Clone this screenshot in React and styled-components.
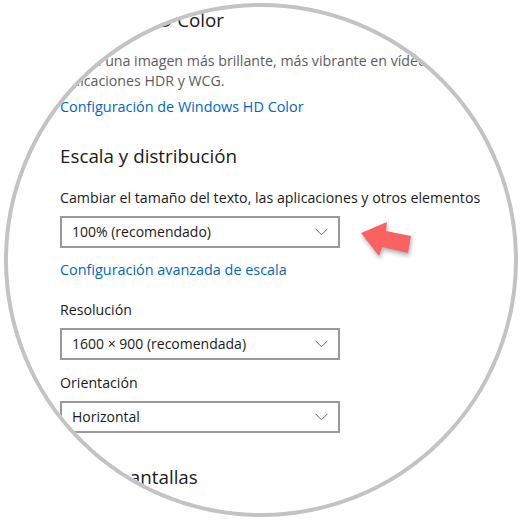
import React from "react";
import styled, { createGlobalStyle } from "styled-components";

const Global = createGlobalStyle`
  html, body { margin: 0; padding: 0; background: #ffffff; }
  body { font-family: "Open Sans", "Noto Sans", sans-serif; }
`;

const Stage = styled.div`
  position: relative;
  width: 520px;
  height: 520px;
  box-sizing: border-box;
  padding: 3px 0 0 4px;
  background: #ffffff;
  overflow: hidden;
`;

const Lens = styled.div`
  width: 514px;
  height: 514px;
  box-sizing: border-box;
  border: 4px solid #c3c3c3;
  border-radius: 50%;
  overflow: hidden;
  background: #ffffff;
`;

const Page = styled.div`
  display: flex;
  flex-direction: column;
  padding: 2px 0 0 52px;
  font-family: "Open Sans", "Noto Sans", sans-serif;
`;

const Title = styled.h2`
  margin: ${(p) => p.$top || 0}px 0 0 0;
  font-size: 18.8px;
  line-height: 22px;
  font-weight: 400;
  color: #1a1a1a;
  white-space: nowrap;
`;

const Description = styled.p`
  margin: 20px 0 0 0;
  font-size: 14.2px;
  line-height: 20px;
  color: #5c5c5c;
  white-space: nowrap;
`;

const Link = styled.a`
  display: block;
  margin-top: ${(p) => p.$top || 0}px;
  font-size: 14.4px;
  line-height: 20px;
  color: #0067c0;
  text-decoration: none;
  white-space: nowrap;
`;

const Field = styled.div`
  display: flex;
  flex-direction: column;
  gap: 8px;
  margin-top: ${(p) => p.$top || 0}px;
`;

const Label = styled.div`
  font-size: 14.2px;
  line-height: 20px;
  color: #1a1a1a;
  white-space: nowrap;
`;

const Select = styled.div`
  display: flex;
  align-items: center;
  justify-content: space-between;
  width: 280px;
  height: 32px;
  box-sizing: border-box;
  border: 2px solid #999999;
  padding: 0 10px 0 10px;
  font-size: 14px;
  line-height: 20px;
  color: #1a1a1a;
`;

const Chevron = () => (
  <svg width="13" height="8" viewBox="0 0 13 8">
    <polyline
      points="0.5,0.8 6.5,6.8 12.5,0.8"
      fill="none"
      stroke="#6a6a6a"
      strokeWidth="1"
    />
  </svg>
);

const Pointer = styled.svg`
  position: absolute;
  left: 355px;
  top: 215px;
  width: 62px;
  height: 46px;
  overflow: visible;
  filter: drop-shadow(1px 3px 2px rgba(0, 0, 0, 0.3));
`;

const Dropdown = ({ children }) => (
  <Select>
    <span>{children}</span>
    <Chevron />
  </Select>
);

export default function App() {
  return (
    <>
      <Global />
      <Stage>
        <Lens>
          <Page>
            <Title>Windows HD Color</Title>
            <Description>
              Obtén una imagen más brillante, más vibrante en vídeos, juegos y
              <br />
              aplicaciones HDR y WCG.
            </Description>
            <Link $top={6}>Configuración de Windows HD Color</Link>
            <Title $top={28}>Escala y distribución</Title>
            <Field $top={21}>
              <Label>Cambiar el tamaño del texto, las aplicaciones y otros elementos</Label>
              <Dropdown>100% (recomendado)</Dropdown>
            </Field>
            <Link $top={12}>Configuración avanzada de escala</Link>
            <Field $top={20}>
              <Label>Resolución</Label>
              <Dropdown>1600 × 900 (recomendada)</Dropdown>
            </Field>
            <Field $top={13}>
              <Label>Orientación</Label>
              <Dropdown>Horizontal</Dropdown>
            </Field>
            <Title $top={33}>Varias pantallas</Title>
          </Page>
        </Lens>
        <Pointer viewBox="0 0 62 46">
          <polygon
            points="6,18 32,7 31,16 56,21 53,38 27,32 24,41"
            fill="#fa6262"
          />
        </Pointer>
      </Stage>
    </>
  );
}
